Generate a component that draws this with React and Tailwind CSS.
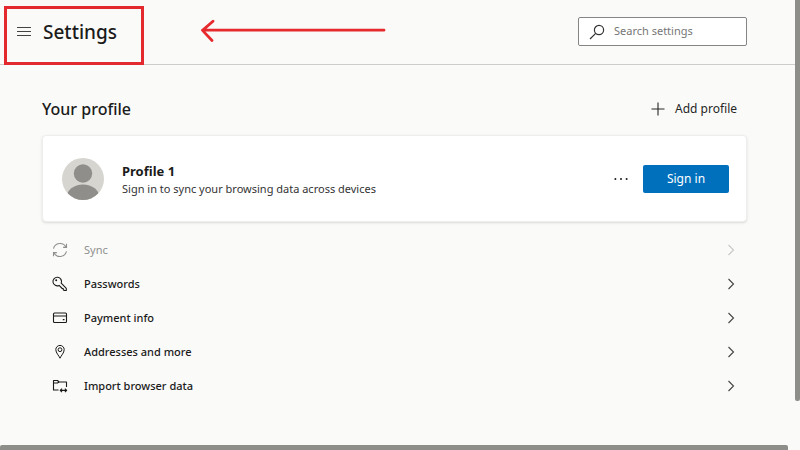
import React, { useState } from 'react';

function SyncIcon() {
  return (
    <svg viewBox="0 0 16 16" className="w-4 h-4" fill="none" stroke="currentColor" strokeWidth="1.1">
      <path d="M1.5 6.6A6.7 6.7 0 0 1 14 5.2" />
      <path d="M14.5 1.8v3.6h-3.4" />
      <path d="M14.5 9.4A6.7 6.7 0 0 1 2 10.8" />
      <path d="M1.5 14.2v-3.6h3.4" />
    </svg>
  );
}

function KeyIcon() {
  return (
    <svg viewBox="0 0 16 16" className="w-4 h-4" fill="none" stroke="currentColor" strokeWidth="1.1" strokeLinejoin="round">
      <path d="M9.2 7.2 14.3 12.3V14.5H12.2L11.2 13.5V12.5H10.2L7.1 9.4A4.3 4.3 0 1 1 9.2 7.2Z" />
      <circle cx="4.2" cy="4.2" r="1" fill="currentColor" stroke="none" />
    </svg>
  );
}

function CardIcon() {
  return (
    <svg viewBox="0 0 16 16" className="w-4 h-4" fill="none" stroke="currentColor" strokeWidth="1.1">
      <rect x="1.5" y="3" width="13" height="9.5" rx="1" />
      <path d="M1.5 6h13M10.8 9.6h1.7" />
    </svg>
  );
}

function PinIcon() {
  return (
    <svg viewBox="0 0 16 16" className="w-4 h-4" fill="none" stroke="currentColor" strokeWidth="1" strokeLinejoin="round">
      <path d="M8 14.2C7 11.6 3.8 9 3.8 5.6a4.2 4.2 0 0 1 8.4 0C12.2 9 9 11.6 8 14.2Z" />
      <circle cx="8" cy="5.7" r="1.9" />
    </svg>
  );
}

function ImportIcon() {
  return (
    <svg viewBox="0 0 16 16" className="w-4 h-4" fill="none" stroke="currentColor" strokeWidth="1.1" strokeLinejoin="round">
      <path d="M6.5 12H1.5V2.5H5.5L7 4H14.5V9" />
      <path d="M1.5 5H5.5L7 4" />
      <path d="M8.3 12.4h6.2M10 10.6 8.2 12.4 10 14.2M12.9 10.6 14.7 12.4 12.9 14.2" />
    </svg>
  );
}

function Chevron() {
  return (
    <svg viewBox="0 0 8 12" className="w-2 h-3" fill="none" stroke="currentColor" strokeWidth="1.1">
      <path d="M1.5 1 6.5 6 1.5 11" />
    </svg>
  );
}

const items = [
  { label: 'Sync', icon: SyncIcon, disabled: true },
  { label: 'Passwords', icon: KeyIcon },
  { label: 'Payment info', icon: CardIcon },
  { label: 'Addresses and more', icon: PinIcon },
  { label: 'Import browser data', icon: ImportIcon },
];

function Header() {
  const [query, setQuery] = useState('');

  return (
    <header className="relative flex items-center justify-between pl-4 pr-12 pt-[17px] pb-[18px] border-b border-[#cfcdcb]">
      <div className="flex items-center gap-[11px]">
        <button type="button" aria-label="Menu" className="text-[#444]">
          <svg viewBox="0 0 16 12" className="w-4 h-3" fill="none" stroke="currentColor" strokeWidth="1">
            <path d="M1 1.5h14M1 5.5h14M1 9.5h14" />
          </svg>
        </button>
        <h1 className="text-[19px] leading-7 font-medium">Settings</h1>
      </div>

      <label className="flex items-center gap-[9px] w-[169px] h-[29px] pl-[10px] bg-white border border-[#858585] rounded-xs">
        <svg viewBox="0 0 16 16" className="w-4 h-4 shrink-0 text-[#333]" fill="none" stroke="currentColor" strokeWidth="1.2">
          <circle cx="10" cy="6" r="4.6" />
          <path d="M6.7 9.3 1 15" />
        </svg>
        <input
          type="text"
          aria-label="Search settings"
          placeholder="Search settings"
          value={query}
          onChange={(e) => setQuery(e.target.value)}
          className="w-full min-w-0 text-[11px] bg-transparent outline-none placeholder:text-[#767676]"
        />
      </label>

      {/* highlight around the menu and title, with the arrow pointing to it */}
      <div className="absolute left-1 top-[6px] w-[140px] h-[59px] border-[3px] border-[#e3292e] pointer-events-none" />
      <svg viewBox="0 0 186 24" className="absolute left-[200px] top-[18px] w-[186px] h-6 pointer-events-none" fill="none" stroke="#e62a2e" strokeWidth="2.8" strokeLinecap="round" strokeLinejoin="round">
        <path d="M2.5 12.2H184M13 3.2 2.5 12.4 12 22.5" />
      </svg>
    </header>
  );
}

function ProfileCard() {
  return (
    <div className="flex items-center h-[87px] pl-[19px] pr-[17px] bg-white rounded border border-[#efeeec] shadow-sm">
      <svg viewBox="0 0 42 42" className="w-[42px] h-[42px] shrink-0">
        <defs>
          <clipPath id="avatar">
            <circle cx="21" cy="21" r="21" />
          </clipPath>
        </defs>
        <circle cx="21" cy="21" r="21" fill="#d6d5d0" />
        <g clipPath="url(#avatar)" fill="#908e8a">
          <circle cx="21" cy="15.5" r="9.2" />
          <ellipse cx="21" cy="39.5" rx="16.5" ry="13" />
        </g>
      </svg>
      <div className="flex-1 ml-[18px] pt-[2px]">
        <h3 className="text-[13px] leading-[18px] font-bold">Profile 1</h3>
        <p className="text-[11px] leading-[18px] text-[#333]">Sign in to sync your browsing data across devices</p>
      </div>
      <button type="button" aria-label="More actions" className="mr-[14px]">
        <svg viewBox="0 0 16 4" className="w-4 h-1" fill="currentColor">
          <circle cx="2.4" cy="2" r="1" />
          <circle cx="8" cy="2" r="1" />
          <circle cx="13.6" cy="2" r="1" />
        </svg>
      </button>
      <button type="button" className="w-[86px] h-7 text-xs text-white bg-[#0070bd] rounded-xs">
        Sign in
      </button>
    </div>
  );
}

function App() {
  return (
    <div className="flex flex-col min-h-screen bg-[#fafaf8] text-[#1b1b1b] font-['Noto_Sans','Open_Sans',sans-serif]">
      <div className="flex flex-1">
        <div className="flex-1">
          <Header />
          <main className="pl-[42px] pr-12 pt-8">
            <div className="flex items-center justify-between mb-[14px] pr-[10px]">
              <h2 className="text-base leading-6 font-medium">Your profile</h2>
              <button type="button" className="flex items-center gap-[10px] text-xs text-[#262626]">
                <svg viewBox="0 0 14 14" className="w-[14px] h-[14px]" fill="none" stroke="currentColor" strokeWidth="1.1">
                  <path d="M7 .5v13M.5 7h13" />
                </svg>
                Add profile
              </button>
            </div>

            <ProfileCard />

            <ul className="mt-[11px]">
              {items.map(({ label, icon: Icon, disabled }) => (
                <li key={label}>
                  <button
                    type="button"
                    disabled={disabled}
                    className="group flex items-center w-full h-[34px] pl-[10px] pr-3 text-[11px] font-medium disabled:font-normal disabled:text-[#8f8f8f]"
                  >
                    <Icon />
                    <span className="flex-1 ml-4 text-left">{label}</span>
                    <span className="text-[#444] group-disabled:text-[#c8c8c8]">
                      <Chevron />
                    </span>
                  </button>
                </li>
              ))}
            </ul>
          </main>
        </div>
        <div className="w-[5px]">
          <div className="h-[90%] bg-[#8d8d8a] rounded-b-xs" />
        </div>
      </div>
      <div className="pr-3">
        <div className="h-[5px] bg-[#8d8d8a] rounded-t-xs" />
      </div>
    </div>
  );
}

export default App;
